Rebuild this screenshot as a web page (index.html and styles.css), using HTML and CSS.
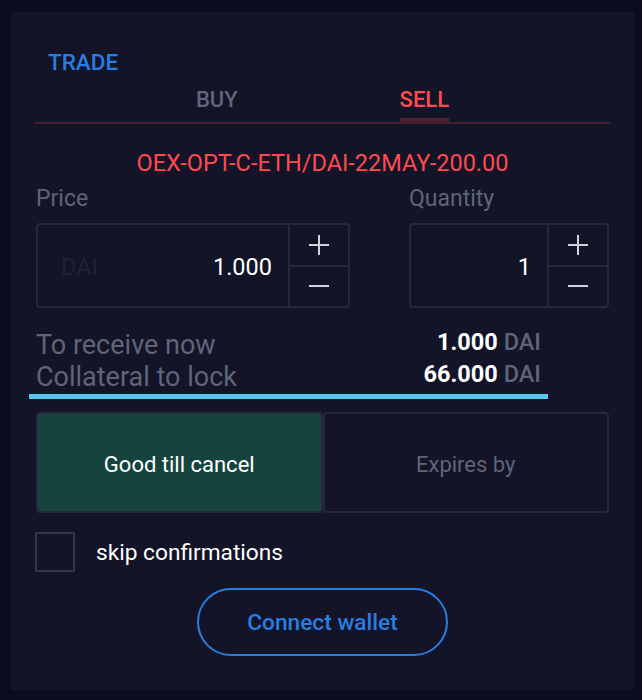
FILE: index.html
```html
<!DOCTYPE html>
<html lang="en">
<head>
    <meta charset="UTF-8">
    <title>Trade</title>
    <link rel="stylesheet" href="styles.css">
</head>
<body>
    <div class="panel">
        <h1 class="title">TRADE</h1>

        <div class="tabs">
            <button class="tab">BUY</button>
            <button class="tab active">SELL</button>
        </div>

        <div class="symbol">OEX-OPT-C-ETH/DAI-22MAY-200.00</div>

        <div class="inputs">
            <div class="field price">
                <label>Price</label>
                <div class="box">
                    <div class="value">
                        <span class="unit">DAI</span>
                        <span class="num">1.000</span>
                    </div>
                    <div class="steps">
                        <button><svg viewBox="0 0 20 20"><path d="M10 0V20M0 10H20"/></svg></button>
                        <button><svg viewBox="0 0 20 20"><path d="M0 10H20"/></svg></button>
                    </div>
                </div>
            </div>
            <div class="field qty">
                <label>Quantity</label>
                <div class="box">
                    <div class="value">
                        <span class="num">1</span>
                    </div>
                    <div class="steps">
                        <button><svg viewBox="0 0 20 20"><path d="M10 0V20M0 10H20"/></svg></button>
                        <button><svg viewBox="0 0 20 20"><path d="M0 10H20"/></svg></button>
                    </div>
                </div>
            </div>
        </div>

        <div class="summary">
            <div class="row">
                <span>To receive now</span>
                <span class="amount"><b>1.000</b> DAI</span>
            </div>
            <div class="row">
                <span>Collateral to lock</span>
                <span class="amount"><b>66.000</b> DAI</span>
            </div>
        </div>

        <div class="order-type">
            <button class="active">Good till cancel</button>
            <button>Expires by</button>
        </div>

        <label class="skip">
            <span class="check"></span>
            skip confirmations
        </label>

        <div class="connect">
            <button>Connect wallet</button>
        </div>
    </div>
</body>
</html>
```

FILE: styles.css
```css
*{
    margin: 0;
    padding: 0;
    box-sizing: border-box;
    font-family: Roboto, sans-serif;
}

body{
    background-color: #0b0c1e;
    padding: 12px 8px 10px 11px;
    height: 700px;
}

button{
    background: none;
    border: none;
    font-family: inherit;
    cursor: pointer;
}

.panel{
    background-color: #131427;
    height: 678px;
    padding: 38px 24px 0 24px;
}

.title{
    font-size: 22.5px;
    font-weight: 500;
    color: #2a7de0;
    margin-left: 13px;
    line-height: 24px;
}

.tabs{
    display: flex;
    justify-content: center;
    gap: 162px;
    margin-top: 15px;
    border-bottom: 2px solid #44202f;

    .tab{
        font-size: 22px;
        font-weight: 500;
        color: #60657c;
        height: 33px;
        line-height: 22px;
        display: flex;
        align-items: flex-start;
    }

    .active{
        color: #ff4a4f;
        border-bottom: 4px solid #4a2232;
    }
}

.symbol{
    text-align: center;
    color: #ff4a4f;
    font-size: 23.5px;
    margin-top: 27px;
    line-height: 24px;
}

.inputs{
    display: flex;
    justify-content: space-between;
    padding: 0 1px;
    margin-top: 12px;

    label{
        display: block;
        font-size: 23px;
        color: #5f6479;
        line-height: 24px;
        margin-bottom: 12px;
    }

    .box{
        display: flex;
        height: 85px;
        border: 2px solid #262838;
        border-radius: 4px;
    }

    .value{
        flex: 1;
        display: flex;
        align-items: center;
        padding: 3px 16px 0 23px;
        font-size: 23.5px;
    }

    .unit{
        color: #1f2236;
    }

    .num{
        color: #ffffff;
        margin-left: auto;
    }

    .steps{
        width: 60px;
        display: flex;
        flex-direction: column;
        border-left: 2px solid #262838;

        button{
            flex: 1;
            display: flex;
            align-items: center;
            justify-content: center;
        }

        button:first-child{
            border-bottom: 2px solid #262838;
        }

        svg{
            width: 20px;
            height: 20px;
            stroke: #d2d3da;
            stroke-width: 2;
            fill: none;
        }
    }

    .price .box{
        width: 314px;
    }

    .qty .box{
        width: 200px;
    }
}

.summary{
    width: 519px;
    margin: 21px 0 0 -6px;
    padding: 0 7px 1px 7px;
    border-bottom: 5px solid #56c8f0;

    .row{
        display: flex;
        justify-content: space-between;
        align-items: center;
        height: 32px;
        font-size: 27px;
        color: #5f6479;
        line-height: 32px;
    }

    .amount{
        font-size: 23.5px;
        font-weight: 500;
        color: #5f6479;
        line-height: 24px;
        padding-bottom: 7px;

        b{
            font-weight: 700;
            color: #ffffff;
        }
    }
}

.order-type{
    display: flex;
    margin: 13px 1px 0 1px;

    button{
        flex: 1;
        height: 101px;
        border: 2px solid #262838;
        border-radius: 4px;
        font-size: 22px;
        color: #5f6479;
        padding-top: 3px;
    }

    .active{
        background-color: #15443f;
        color: #ffffff;
    }
}

.skip{
    display: flex;
    align-items: center;
    gap: 21px;
    margin-top: 19px;
    font-size: 22.7px;
    color: #ffffff;

    .check{
        width: 40px;
        height: 40px;
        border: 2px solid #33354a;
    }
}

.connect{
    display: flex;
    justify-content: center;
    margin-top: 16px;

    button{
        width: 251px;
        height: 68px;
        border: 2px solid #2a7de0;
        border-radius: 34px;
        color: #2a7de0;
        font-size: 22.7px;
        font-weight: 500;
    }
}
```
